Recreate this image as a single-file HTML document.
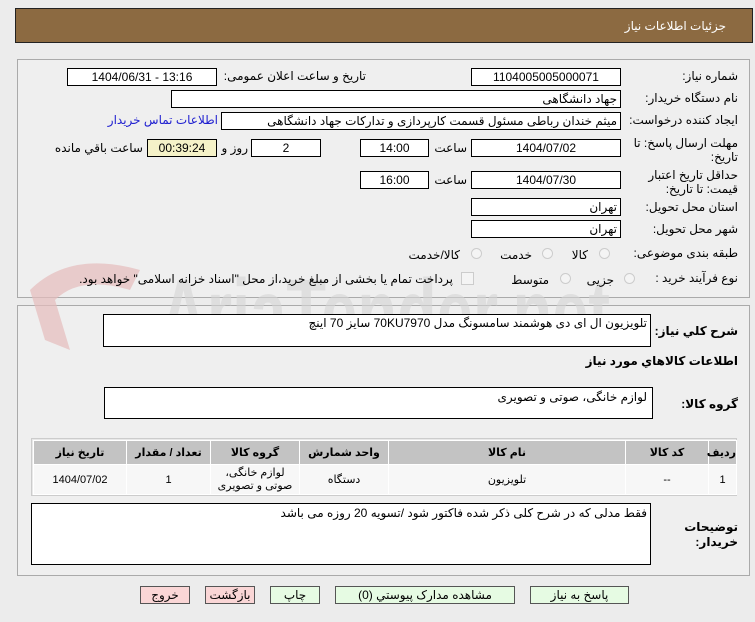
<!DOCTYPE html>
<html><head><meta charset="utf-8"><style>
body{margin:0;width:755px;height:622px;background:#ececec;font-family:"Liberation Sans","DejaVu Sans",sans-serif;font-size:12px;color:#000;position:relative;overflow:hidden}
.a{position:absolute;white-space:nowrap}
.box{position:absolute;background:#fff;border:1px solid #000;box-sizing:border-box;font-size:12px;text-align:center;line-height:16px}
.l{position:absolute;white-space:nowrap;text-align:right;direction:rtl}
.rb{position:absolute;width:11px;height:11px;border:1px solid #ccc;border-radius:50%;background:#f4f4f4;box-sizing:border-box}
.btn{position:absolute;top:586px;height:18px;border:1px solid #555;box-sizing:border-box;text-align:center;line-height:16px;font-size:12px;background:#e6fbe3}
td,th{border:1px solid #fff;text-align:center;font-size:11px;padding:0}
</style></head><body>
<div class="a" style="left:15px;top:8px;width:738px;height:35px;background:#8c6a41;border:1px solid #222;box-sizing:border-box"></div>
<div class="l" style="right:29px;top:19px;color:#fff;font-size:12px">جزئیات اطلاعات نیاز</div>
<div class="a" style="left:17px;top:59px;width:733px;height:239px;border:1px solid #aaa;background:#efefef;box-sizing:border-box"></div>
<div class="a" style="left:17px;top:305px;width:733px;height:271px;border:1px solid #aaa;background:#efefef;box-sizing:border-box"></div>
<svg class="a" style="left:10px;top:240px" width="640" height="130"><g fill="#e6bcbc" opacity=".7"><path d="M20 50 Q60 10 130 30 L120 50 Q70 35 45 60 L60 110 L35 100 Z"/></g><text x="150" y="105" font-size="95" font-family="Liberation Sans" font-weight="bold" fill="#d6d6d6" opacity=".6" textLength="450" lengthAdjust="spacingAndGlyphs">AriaTender.net</text></svg>

<div class="l" style="right:17px;top:69px">شماره نیاز:</div>
<div class="box" style="left:471px;top:68px;width:150px;height:18px">1104005005000071</div>
<div class="l" style="right:389px;top:69px">تاریخ و ساعت اعلان عمومی:</div>
<div class="box" style="left:67px;top:68px;width:150px;height:18px">1404/06/31 - 13:16</div>

<div class="l" style="right:17px;top:91px">نام دستگاه خریدار:</div>
<div class="box" style="left:171px;top:90px;width:450px;height:18px;text-align:right;padding-right:3px;direction:rtl">جهاد دانشگاهی</div>

<div class="l" style="right:17px;top:113px">ایجاد کننده درخواست:</div>
<div class="box" style="left:221px;top:112px;width:400px;height:18px;text-align:right;padding-right:3px;direction:rtl">میثم خندان رباطی مسئول قسمت کارپردازی و تدارکات جهاد دانشگاهی</div>
<div class="l" style="right:537px;top:113px;color:#2020d0">اطلاعات تماس خریدار</div>

<div class="l" style="right:17px;top:136px;line-height:14px">مهلت ارسال پاسخ: تا<br>تاریخ:</div>
<div class="box" style="left:471px;top:139px;width:150px;height:18px">1404/07/02</div>
<div class="l" style="right:288px;top:141px">ساعت</div>
<div class="box" style="left:360px;top:139px;width:69px;height:18px">14:00</div>
<div class="box" style="left:251px;top:139px;width:70px;height:18px">2</div>
<div class="l" style="right:507px;top:141px">روز و</div>
<div class="box" style="left:147px;top:139px;width:70px;height:18px;background:#f5f2c8">00:39:24</div>
<div class="l" style="right:612px;top:141px">ساعت باقي مانده</div>

<div class="l" style="right:17px;top:168px;line-height:14px">حداقل تاریخ اعتبار<br>قیمت: تا تاریخ:</div>
<div class="box" style="left:471px;top:171px;width:150px;height:18px">1404/07/30</div>
<div class="l" style="right:288px;top:173px">ساعت</div>
<div class="box" style="left:360px;top:171px;width:69px;height:18px">16:00</div>

<div class="l" style="right:17px;top:200px">استان محل تحویل:</div>
<div class="box" style="left:471px;top:198px;width:150px;height:18px;text-align:right;padding-right:3px">تهران</div>
<div class="l" style="right:17px;top:222px">شهر محل تحویل:</div>
<div class="box" style="left:471px;top:220px;width:150px;height:18px;text-align:right;padding-right:3px">تهران</div>

<div class="l" style="right:17px;top:246px">طبقه بندی موضوعی:</div>
<div class="rb" style="left:599px;top:248px"></div><div class="l" style="right:167px;top:248px">کالا</div>
<div class="rb" style="left:542px;top:248px"></div><div class="l" style="right:223px;top:248px">خدمت</div>
<div class="rb" style="left:471px;top:248px"></div><div class="l" style="right:295px;top:248px">کالا/خدمت</div>

<div class="l" style="right:17px;top:271px">نوع فرآیند خرید :</div>
<div class="rb" style="left:624px;top:273px"></div><div class="l" style="right:141px;top:273px">جزیی</div>
<div class="rb" style="left:560px;top:273px"></div><div class="l" style="right:206px;top:273px">متوسط</div>
<div class="a" style="left:461px;top:272px;width:11px;height:11px;border:1px solid #ccc;background:#f4f4f4"></div>
<div class="l" style="right:302px;top:272px">پرداخت تمام یا بخشی از مبلغ خرید،از محل "اسناد خزانه اسلامی" خواهد بود.</div>

<div class="l" style="right:17px;top:324px;font-weight:bold">شرح کلي نياز:</div>
<div class="box" style="left:103px;top:314px;width:548px;height:33px;text-align:right;padding-right:3px;direction:rtl;line-height:16px">تلویزیون ال ای دی هوشمند سامسونگ مدل 70KU7970 سایز 70 اینچ</div>
<div class="l" style="right:17px;top:354px;font-weight:bold">اطلاعات کالاهاي مورد نياز</div>
<div class="l" style="right:17px;top:397px;font-weight:bold">گروه کالا:</div>
<div class="box" style="left:104px;top:387px;width:549px;height:32px;text-align:right;padding-right:5px;direction:rtl;line-height:18px">لوازم خانگی، صوتی و تصویری</div>

<div class="a" style="left:31px;top:438px;width:706px;height:58px;border:1px solid #ccc;background:#e8e8e8;box-sizing:border-box"></div>
<table class="a" style="left:33px;top:440px;width:703px;border-collapse:collapse;direction:rtl;table-layout:fixed">
<colgroup><col style="width:28px"><col style="width:83px"><col style="width:237px"><col style="width:89px"><col style="width:89px"><col style="width:84px"><col style="width:93px"></colgroup>
<tr style="background:#c3c3c3;height:24px;font-weight:bold"><th>ردیف</th><th>کد کالا</th><th>نام کالا</th><th>واحد شمارش</th><th>گروه کالا</th><th>تعداد / مقدار</th><th>تاریخ نیاز</th></tr>
<tr style="background:#f7f7f7;height:30px"><td>1</td><td>--</td><td>تلویزیون</td><td>دستگاه</td><td style="line-height:13px">لوازم خانگی،<br>صوتی و تصویری</td><td>1</td><td>1404/07/02</td></tr>
</table>

<div class="l" style="right:17px;top:520px;font-weight:bold;line-height:15px">توضیحات<br>خریدار:</div>
<div class="box" style="left:31px;top:503px;width:620px;height:62px;text-align:right;padding-right:3px;direction:rtl;line-height:18px">فقط مدلی که در شرح کلی ذکر شده فاکتور شود /تسویه 20 روزه می باشد</div>

<div class="btn" style="left:530px;width:99px">پاسخ به نیاز</div>
<div class="btn" style="left:335px;width:180px">مشاهده مدارک پیوستي (0)</div>
<div class="btn" style="left:270px;width:50px">چاپ</div>
<div class="btn" style="left:205px;width:50px;background:#fad6d6">بازگشت</div>
<div class="btn" style="left:140px;width:50px;background:#fad6d6">خروج</div>
</body></html>
